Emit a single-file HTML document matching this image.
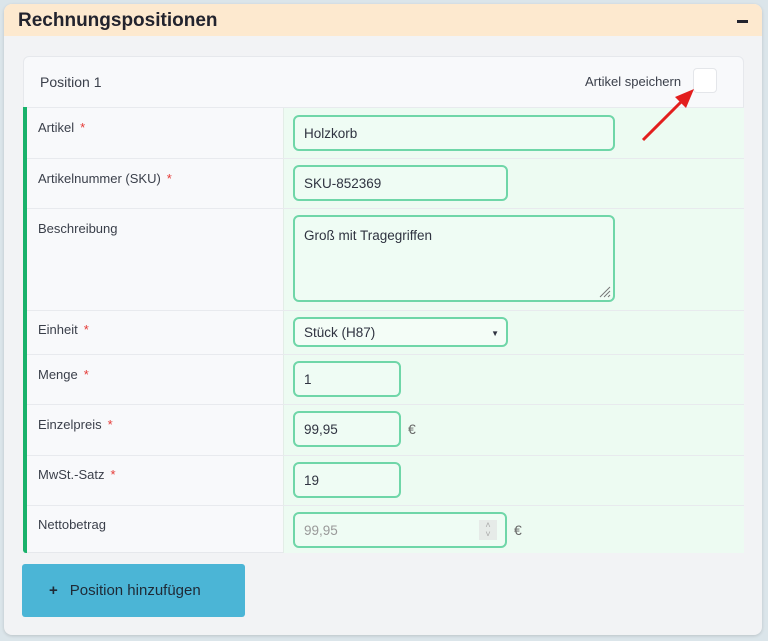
<!DOCTYPE html>
<html><head><meta charset="utf-8"><style>
*{box-sizing:border-box;margin:0;padding:0}
body{width:768px;height:641px;background:#dbe5ea;font-family:"Liberation Sans",sans-serif;position:relative;overflow:hidden;color:#3a3f4a}
.a{position:absolute}
.card{left:4px;top:4px;width:758px;height:631px;background:#f2f3f5;border-radius:8px;box-shadow:0 1px 3px rgba(0,0,0,.15);overflow:hidden}
.hd{left:0;top:0;width:758px;height:32px;background:#fde9cf}
.hd span{position:absolute;left:14px;top:6px;font-size:19px;font-weight:bold;color:#22232e}
.inner{left:23px;top:56px;width:721px;height:497px;background:#f8f9fb;border-radius:6px;border:1px solid #e6e8ec;overflow:hidden}
.lbl{font-size:13px;color:#3a3f4a}
.st{color:#e53935;margin-left:6px}
.row{left:27px;width:717px;border-top:1px solid #e8eaee}
.val{left:283px;width:461px;background:#edfbf2;border-left:1px solid #e3ede7}
.in{border:2px solid #6fd6a8;border-radius:6px;background:#effcf4;font-size:13.5px;color:#2f3340;padding-left:9px;display:flex;align-items:center}
</style></head><body>
<div class="a card">
<div class="a hd"><span>Rechnungspositionen</span><div class="a" style="left:733px;top:16px;width:11px;height:3px;background:#22232e"></div></div>
</div>
<div class="a inner"></div>
<div class="a lbl" style="left:40px;top:74px;font-size:14px">Position 1</div>
<div class="a lbl" style="left:585px;top:74px">Artikel speichern</div>
<div class="a" style="left:693px;top:68px;width:24px;height:25px;background:#fff;border:1px solid #e4e6ea;border-radius:4px"></div>
<div class="a" style="left:23px;top:107px;width:4px;height:446px;background:#19b26b;border-radius:0 0 0 3px"></div>

<div class="a val" style="top:107px;height:446px"></div>
<div class="a row" style="top:107px;height:1px"></div>
<div class="a row" style="top:158px;height:1px"></div>
<div class="a row" style="top:208px;height:1px"></div>
<div class="a row" style="top:310px;height:1px"></div>
<div class="a row" style="top:354px;height:1px"></div>
<div class="a row" style="top:404px;height:1px"></div>
<div class="a row" style="top:455px;height:1px"></div>
<div class="a row" style="top:505px;height:1px"></div>

<div class="a lbl" style="left:38px;top:120px">Artikel<span class="st">*</span></div>
<div class="a lbl" style="left:38px;top:171px">Artikelnummer (SKU)<span class="st">*</span></div>
<div class="a lbl" style="left:38px;top:221px">Beschreibung</div>
<div class="a lbl" style="left:38px;top:322px">Einheit<span class="st">*</span></div>
<div class="a lbl" style="left:38px;top:367px">Menge<span class="st">*</span></div>
<div class="a lbl" style="left:38px;top:417px">Einzelpreis<span class="st">*</span></div>
<div class="a lbl" style="left:38px;top:467px">MwSt.-Satz<span class="st">*</span></div>
<div class="a lbl" style="left:38px;top:517px">Nettobetrag</div>

<div class="a in" style="left:293px;top:115px;width:322px;height:36px">Holzkorb</div>
<div class="a in" style="left:293px;top:165px;width:215px;height:36px">SKU-852369</div>
<div class="a in" style="left:293px;top:215px;width:322px;height:87px;align-items:flex-start;padding-top:11px">Groß mit Tragegriffen
<svg class="a" style="right:2px;bottom:2px" width="14" height="14"><path d="M13 3L3 13M13 7L7 13M13 11L11 13" stroke="#777" stroke-width="1"/></svg></div>
<div class="a in" style="left:293px;top:317px;width:215px;height:30px;background:#f4fdf7">Stück (H87)<span class="a" style="right:7px;top:10px;font-size:8px">▼</span></div>
<div class="a in" style="left:293px;top:361px;width:108px;height:36px">1</div>
<div class="a in" style="left:293px;top:411px;width:108px;height:36px">99,95</div>
<div class="a lbl" style="left:408px;top:421px;font-size:14px;color:#666">€</div>
<div class="a in" style="left:293px;top:462px;width:108px;height:36px">19</div>
<div class="a in" style="left:293px;top:512px;width:214px;height:36px;color:#999">99,95<div class="a" style="right:8px;top:6px;width:18px;height:20px;background:#e6ebe8;color:#aaa;font-size:9px;text-align:center;line-height:9px;padding-top:1px">˄<br>˅</div></div>
<div class="a lbl" style="left:514px;top:522px;font-size:14px;color:#666">€</div>

<div class="a" style="left:22px;top:564px;width:223px;height:53px;background:#4bb5d6;border-radius:3px;font-size:15px;color:#1f2a36;line-height:53px;padding-left:27px"><b style="font-weight:bold;margin-right:12px">+</b>Position hinzufügen</div>
<svg class="a" style="left:638px;top:85px" width="60" height="60"><line x1="5" y1="55" x2="45" y2="15" stroke="#e31e1e" stroke-width="3"/><polygon points="56,4 37,12 48,23" fill="#e31e1e"/></svg>
</body></html>
